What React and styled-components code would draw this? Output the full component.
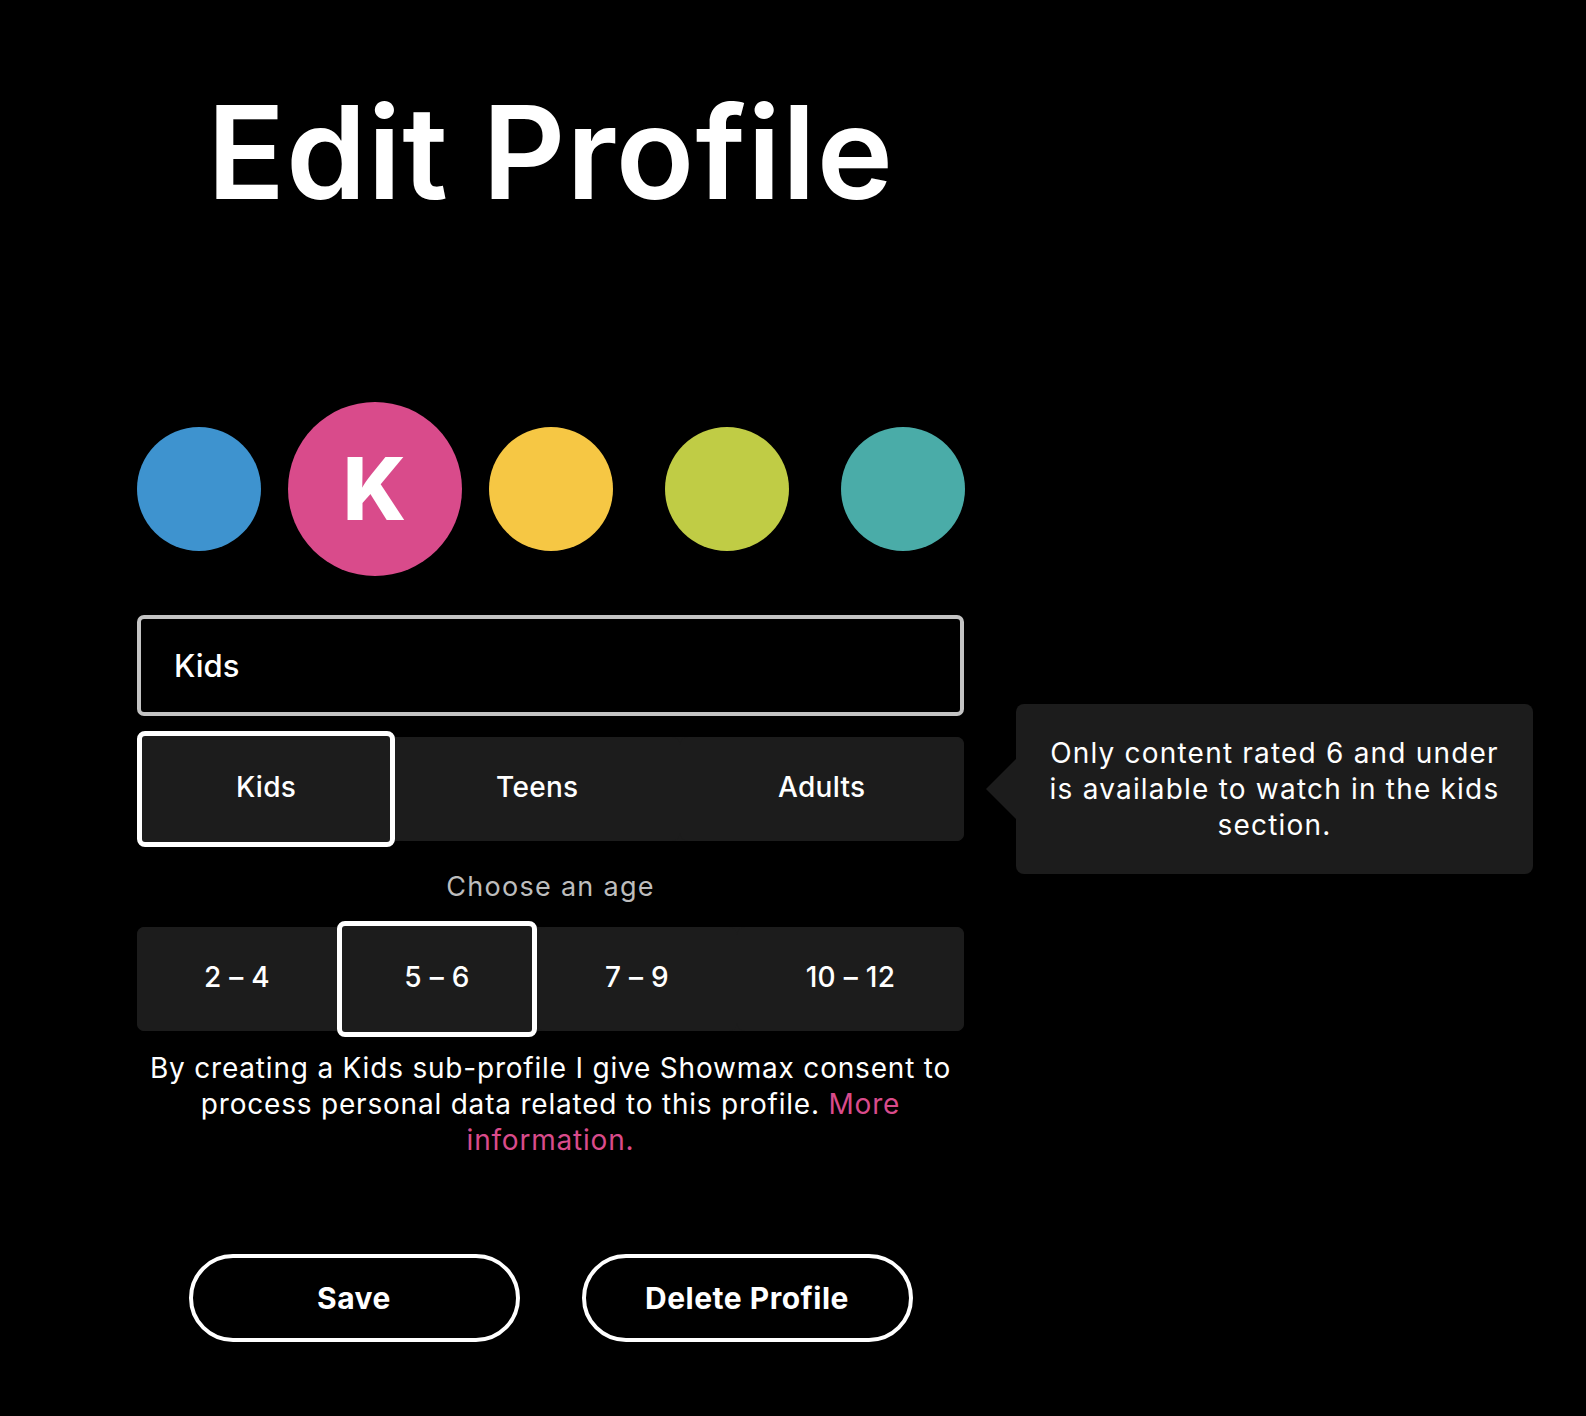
import React from "react";
import styled, { createGlobalStyle } from "styled-components";

const GlobalStyle = createGlobalStyle`
  html, body {
    margin: 0;
    padding: 0;
    background: #000;
  }
  body {
    font-family: Inter, "Noto Sans", sans-serif;
    color: #fff;
  }
`;

const avatars = [
  { color: "#3e93cf" },
  { color: "#d94b8b", letter: "K", active: true },
  { color: "#f6c744" },
  { color: "#c0cc45" },
  { color: "#4aaca8" },
];

const types = ["Kids", "Teens", "Adults"];
const ages = ["2 – 4", "5 – 6", "7 – 9", "10 – 12"];

const App = () => {
  return (
    <>
      <GlobalStyle />
      <Page>
        <Column>
          <Title>Edit Profile</Title>

          <Avatars>
            {avatars.map((a, i) => (
              <Slot key={i}>
                <Avatar $color={a.color} $active={a.active}>
                  {a.letter}
                </Avatar>
              </Slot>
            ))}
          </Avatars>

          <NameInput defaultValue="Kids" readOnly />

          <TypeBar>
            {types.map((t, i) => (
              <Segment key={t} $selected={i === 0}>
                {t}
              </Segment>
            ))}
            <Tooltip>
              Only content rated 6 and under
              <br />
              is available to watch in the kids
              <br />
              section.
            </Tooltip>
          </TypeBar>

          <AgeLabel>Choose an age</AgeLabel>

          <AgeBar>
            {ages.map((a, i) => (
              <Segment key={a} $selected={i === 1}>
                {a}
              </Segment>
            ))}
          </AgeBar>

          <Consent>
            By creating a Kids sub-profile I give Showmax consent to
            <br />
            process personal data related to this profile.{" "}
            <MoreLink href="#">
              More
              <br />
              information.
            </MoreLink>
          </Consent>

          <Actions>
            <PillButton>Save</PillButton>
            <PillButton>Delete Profile</PillButton>
          </Actions>
        </Column>
      </Page>
    </>
  );
};

const Page = styled.div`
  min-height: 1416px;
  padding-left: 137px;
  box-sizing: border-box;
`;

const Column = styled.div`
  width: 827px;
  padding-top: 88px;
  display: flex;
  flex-direction: column;
`;

const Title = styled.h1`
  margin: 0;
  text-align: center;
  font-size: 129px;
  font-weight: 600;
  line-height: 1;
  letter-spacing: 1px;
`;

const Avatars = styled.div`
  display: flex;
  justify-content: center;
  align-items: center;
  height: 176px;
  margin-top: 184px;
`;

const Slot = styled.div`
  flex: 0 0 176px;
  display: flex;
  justify-content: center;
  align-items: center;
`;

const Avatar = styled.div`
  width: ${(p) => (p.$active ? 174 : 124)}px;
  height: ${(p) => (p.$active ? 174 : 124)}px;
  border-radius: 50%;
  background: ${(p) => p.$color};
  display: flex;
  align-items: center;
  justify-content: center;
  font-size: 86px;
  font-weight: 800;
  color: #fff;
`;

const NameInput = styled.input`
  margin-top: 38px;
  height: 101px;
  box-sizing: border-box;
  border: 4px solid #c4c4c4;
  border-radius: 7px;
  background: #000;
  color: #fff;
  font-family: inherit;
  font-size: 31px;
  font-weight: 500;
  padding: 0 33px;
  outline: none;
`;

const Bar = styled.div`
  position: relative;
  display: grid;
  height: 104px;
  background: #1c1c1c;
  border-radius: 7px;
`;

const TypeBar = styled(Bar)`
  margin-top: 21px;
  grid-template-columns: 258px 1fr 1fr;
`;

const AgeBar = styled(Bar)`
  margin-top: 22px;
  grid-template-columns: 200px 200px 200px 1fr;
`;

const Segment = styled.div`
  display: flex;
  align-items: center;
  justify-content: center;
  padding-bottom: 4px;
  font-size: 28px;
  font-weight: 500;
  letter-spacing: 0.3px;
  color: #fff;
  box-sizing: border-box;
  margin: ${(p) => (p.$selected ? "-6px 0" : "0")};
  border: ${(p) => (p.$selected ? "5px solid #fff" : "none")};
  border-radius: 8px;
  background: #1c1c1c;
`;

const Tooltip = styled.div`
  position: absolute;
  left: calc(100% + 52px);
  top: 50%;
  transform: translateY(-50%);
  width: 517px;
  height: 170px;
  box-sizing: border-box;
  background: #1c1c1c;
  border-radius: 8px;
  display: flex;
  align-items: center;
  justify-content: center;
  text-align: center;
  font-size: 28px;
  letter-spacing: 1.2px;
  line-height: 36px;
  white-space: nowrap;
  &::before {
    content: "";
    position: absolute;
    left: -30px;
    top: 50%;
    margin-top: -30px;
    border-style: solid;
    border-width: 30px 30px 30px 0;
    border-color: transparent #1c1c1c transparent transparent;
  }
`;

const AgeLabel = styled.div`
  margin-top: 28px;
  text-align: center;
  font-size: 27px;
  letter-spacing: 1.3px;
  line-height: 36px;
  color: #bdbdbd;
`;

const Consent = styled.p`
  margin: 19px 0 0;
  text-align: center;
  font-size: 28px;
  letter-spacing: 0.8px;
  line-height: 36px;
  white-space: nowrap;
`;

const MoreLink = styled.a`
  color: #d94b8b;
  text-decoration: none;
`;

const Actions = styled.div`
  display: flex;
  justify-content: center;
  gap: 62px;
  margin-top: 96px;
`;

const PillButton = styled.button`
  width: 331px;
  height: 88px;
  box-sizing: border-box;
  border: 4px solid #fff;
  border-radius: 44px;
  background: #000;
  color: #fff;
  font-family: inherit;
  font-size: 30px;
  font-weight: 700;
  letter-spacing: 0.5px;
  cursor: pointer;
`;

export default App;
